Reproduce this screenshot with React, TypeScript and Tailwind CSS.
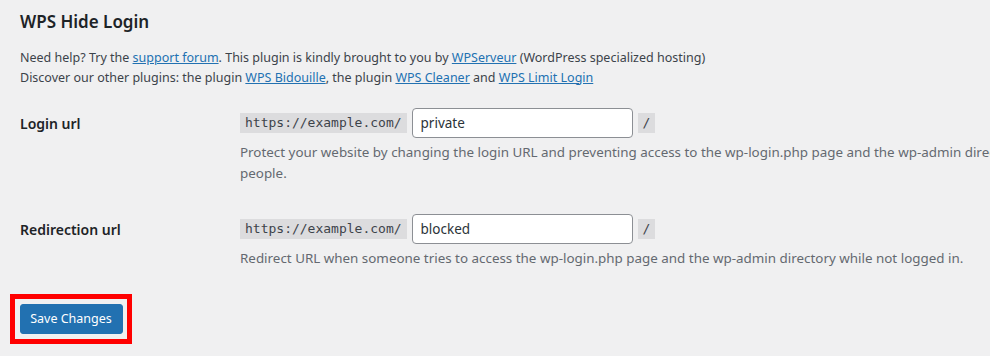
import React from 'react';

const sans = "font-['Noto_Sans',_'Liberation_Sans',_sans-serif]";
const mono = "font-['DejaVu_Sans_Mono',_'Liberation_Mono',_monospace]";

function Link({ children }: { children: React.ReactNode }) {
  return <a href="#" className="text-[#2271b1] underline">{children}</a>;
}

function UrlField({ value }: { value: string }) {
  return (
    <div className="flex items-center h-[30px]">
      <code className={`${mono} text-[13px] leading-[20px] h-[20px] px-[5px] bg-[#dcdcde] text-[#3c434a]`}>
        https://example.com/
      </code>
      <input
        type="text"
        defaultValue={value}
        className={`${sans} ml-[5px] w-[221px] h-[30px] px-[8px] text-[13.5px] text-[#2c3338] bg-white border border-[#8c8f94] rounded-[4px] outline-none`}
      />
      <code className={`${mono} ml-[5px] text-[13px] leading-[20px] h-[20px] px-[5px] bg-[#dcdcde] text-[#3c434a]`}>
        /
      </code>
    </div>
  );
}

export default function App() {
  return (
    <div className={`${sans} w-[990px] h-[356px] overflow-hidden bg-[#f0f0f1] text-[#3c434a] pl-[20px]`}>
      <h2 className="pt-[11px] text-[17px] leading-[22px] font-semibold text-[#1d2327]">WPS Hide Login</h2>

      <p className="mt-[15px] text-[12.5px] leading-[19.5px]">
        Need help? Try the <Link>support forum</Link>. This plugin is kindly brought to you by <Link>WPServeur</Link> (WordPress specialized hosting)
        <br />
        Discover our other plugins: the plugin <Link>WPS Bidouille</Link>, the plugin <Link>WPS Cleaner</Link> and <Link>WPS Limit Login</Link>
      </p>

      <div className="mt-[21px] flex">
        <div className="w-[220px] shrink-0 h-[30px] flex items-center text-[14px] font-semibold text-[#1d2327]">Login url</div>
        <div className="shrink-0">
          <UrlField value="private" />
          <p className="mt-[4px] w-[910px] text-[13.4px] leading-[21px] text-[#646970]">
            Protect your website by changing the login URL and preventing access to the wp-login.php page and the wp-admin directory to non-connected people.
          </p>
        </div>
      </div>

      <div className="mt-[30px] flex">
        <div className="w-[220px] shrink-0 h-[30px] flex items-center text-[14px] font-semibold text-[#1d2327]">Redirection url</div>
        <div className="shrink-0">
          <UrlField value="blocked" />
          <p className="mt-[4px] text-[13.4px] leading-[21px] text-[#646970]">
            Redirect URL when someone tries to access the wp-login.php page and the wp-admin directory while not logged in.
          </p>
        </div>
      </div>

      <div className="mt-[25px] -ml-[10px] w-[122px] h-[50px] border-[5px] border-[#ff0000] flex items-center justify-center">
        <button className="h-[30px] w-[103px] rounded-[3px] bg-[#2271b1] border border-[#2271b1] text-white text-[12.5px]">
          Save Changes
        </button>
      </div>
    </div>
  );
}
